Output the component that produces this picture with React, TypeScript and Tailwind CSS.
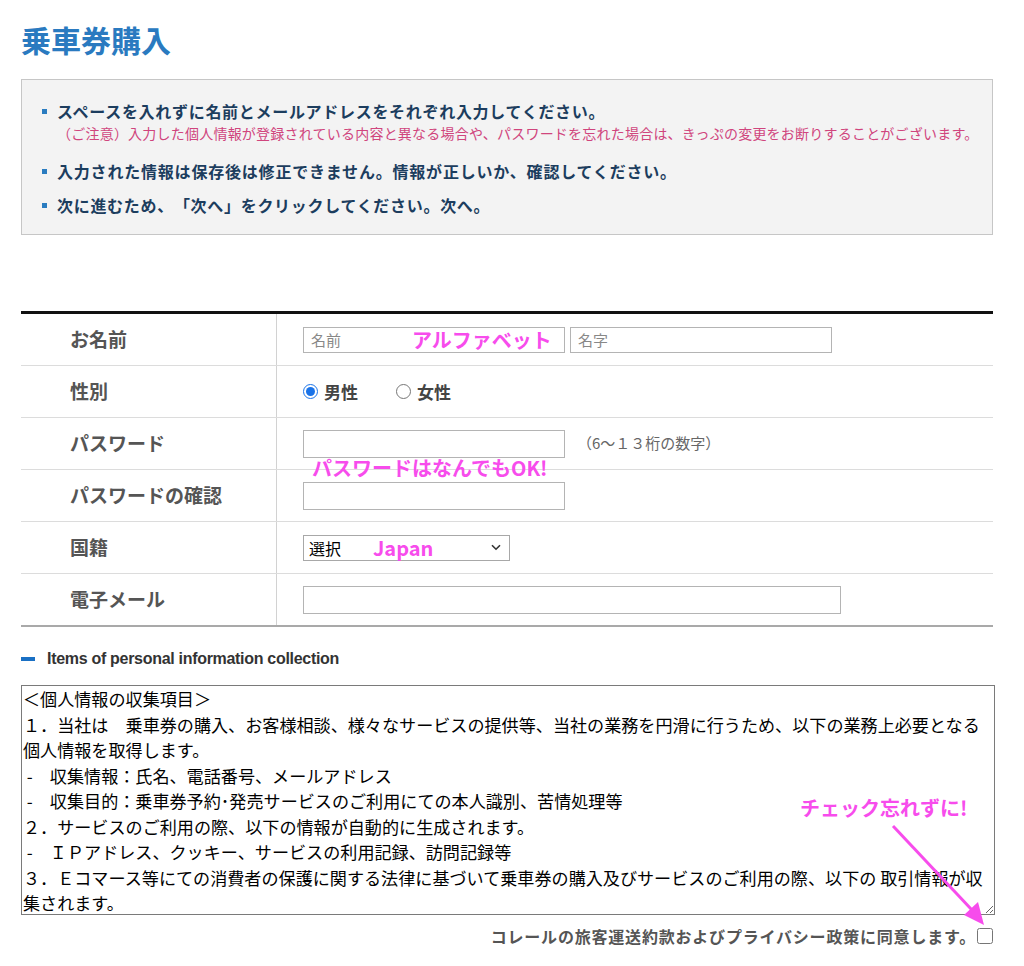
import React from "react";

const noteLines = [
  "＜個人情報の収集項目＞",
  "１．当社は　乗車券の購入、お客様相談、様々なサービスの提供等、当社の業務を円滑に行うため、以下の業務上必要となる個人情報を取得します。",
  " -　収集情報：氏名、電話番号、メールアドレス",
  " -　収集目的：乗車券予約･発売サービスのご利用にての本人識別、苦情処理等",
  "２．サービスのご利用の際、以下の情報が自動的に生成されます。",
  " -　ＩＰアドレス、クッキー、サービスの利用記録、訪問記録等",
  "３．Ｅコマース等にての消費者の保護に関する法律に基づいて乗車券の購入及びサービスのご利用の際、以下の 取引情報が収集されます。",
];

interface RowProps {
  label: string;
  last?: boolean;
  children: React.ReactNode;
}

function Row({ label, last, children }: RowProps) {
  return (
    <div
      className={
        last
          ? "flex h-[53px] border-b-[2px] border-[#a9a9a9]"
          : "flex h-[52px] border-b border-[#dcdcdc]"
      }
    >
      <div className="flex w-[256px] shrink-0 items-center border-r border-[#d2d2d2] pl-[49px] text-[19px] font-bold text-[#555]">
        {label}
      </div>
      <div className="flex flex-1 items-center pl-[26px]">{children}</div>
    </div>
  );
}

const pink = "text-[20px] font-bold leading-none text-[#f74cec]";

export default function App() {
  return (
    <div className="min-h-[966px] bg-white pl-[21px] font-['Noto_Sans_CJK_JP',sans-serif] [text-spacing-trim:space-all]">
      <div className="w-[972px]">
        <h1 className="pt-[17px] text-[30px] font-bold leading-[45px] text-[#2a7ac0]">乗車券購入</h1>

        {/* notice box */}
        <ul className="mt-[17px] flex flex-col gap-[10px] border border-[#c6c6c6] bg-[#f3f3f3] pb-[17px] pl-[20px] pr-4 pt-[19px]">
          <li>
            <div className="flex items-center gap-[10px] text-[16px] font-bold leading-[24px] tracking-[0.7px] text-[#1c3d5e]">
              <span className="h-[5px] w-[5px] bg-[#2a7cc0]" />
              スペースを入れずに名前とメールアドレスをそれぞれ入力してください。
            </div>
            <p className="mb-[6px] whitespace-nowrap pl-[15px] text-[14px] leading-[20px] tracking-[0.22px] text-[#d0457d]">
              （ご注意）入力した個人情報が登録されている内容と異なる場合や、パスワードを忘れた場合は、きっぷの変更をお断りすることがございます。
            </p>
          </li>
          <li className="flex items-center gap-[10px] text-[16px] font-bold leading-[24px] tracking-[0.8px] text-[#1c3d5e]">
            <span className="h-[5px] w-[5px] bg-[#2a7cc0]" />
            入力された情報は保存後は修正できません。情報が正しいか、確認してください。
          </li>
          <li className="flex items-center gap-[10px] text-[16px] font-bold leading-[24px] tracking-[0.7px] text-[#1c3d5e]">
            <span className="h-[5px] w-[5px] bg-[#2a7cc0]" />
            次に進むため、「次へ」をクリックしてください。次へ。
          </li>
        </ul>

        {/* form table */}
        <div className="mt-[76px] border-t-[3px] border-[#111]">
          <Row label="お名前">
            <div className="relative">
              <input
                placeholder="名前"
                className="h-[26px] w-[262px] border border-[#b4b4b4] px-[7px] text-[15px] placeholder:text-[#888]"
              />
              <span className={`pointer-events-none absolute left-[109px] top-[3px] ${pink}`}>アルファベット</span>
            </div>
            <input
              placeholder="名字"
              className="ml-[5px] h-[26px] w-[262px] border border-[#b4b4b4] px-[7px] text-[15px] placeholder:text-[#888]"
            />
          </Row>
          <Row label="性別">
            <label className="flex items-center gap-[6px] text-[17px] font-bold text-[#444]">
              <input type="radio" name="sex" defaultChecked className="m-0 h-[15px] w-[15px] accent-[#1a73e8]" />
              男性
            </label>
            <label className="ml-[38px] flex items-center gap-[6px] text-[17px] font-bold text-[#444]">
              <input type="radio" name="sex" className="m-0 h-[15px] w-[15px] accent-[#1a73e8]" />
              女性
            </label>
          </Row>
          <Row label="パスワード">
            <div className="relative">
              <input type="password" className="h-[28px] w-[262px] border border-[#b4b4b4] px-[7px]" />
              <span className={`pointer-events-none absolute left-[9px] top-[28px] z-10 whitespace-nowrap ${pink}`}>
                パスワードはなんでもOK!
              </span>
            </div>
            <span className="ml-[12px] text-[15px] text-[#666]">（6～１３桁の数字）</span>
          </Row>
          <Row label="パスワードの確認">
            <input type="password" className="h-[28px] w-[262px] border border-[#b4b4b4] px-[7px]" />
          </Row>
          <Row label="国籍">
            <div className="relative h-[26px] w-[207px]">
              <select className="h-full w-full appearance-none border border-[#a8a8a8] bg-white pl-[5px] text-[16px] text-black">
                <option>選択</option>
              </select>
              <span className={`pointer-events-none absolute left-[70px] top-[3px] ${pink}`}>Japan</span>
              <svg
                className="pointer-events-none absolute right-[9px] top-[9px]"
                width="10"
                height="7"
                viewBox="0 0 10 7"
                fill="none"
                stroke="#333"
                strokeWidth="1.6"
              >
                <path d="M1 1.2l4 4 4-4" />
              </svg>
            </div>
          </Row>
          <Row label="電子メール" last>
            <input type="email" className="h-[28px] w-[538px] border border-[#b4b4b4] px-[7px]" />
          </Row>
        </div>

        {/* personal info section */}
        <div className="mt-[20px] flex items-center gap-[12px]">
          <span className="h-[4px] w-[14px] bg-[#1a70c4]" />
          <h2 className="font-['Liberation_Sans',Arial,sans-serif] text-[16px] font-bold leading-[24px] tracking-[-0.3px] text-[#333]">
            Items of personal information collection
          </h2>
        </div>

        <div className="relative mt-[14px]">
          <textarea
            readOnly
            value={noteLines.join("\n")}
            className="block h-[230px] w-[974px] overflow-hidden border border-[#7a7a7a] px-[1px] py-0 text-[17.1px] leading-[25.5px] text-black"
          />
          <span className={`pointer-events-none absolute left-[779px] top-[113px] whitespace-nowrap ${pink}`}>
            チェック忘れずに!
          </span>
          <svg
            className="pointer-events-none absolute left-0 top-0 overflow-visible"
            width="974"
            height="260"
            viewBox="0 0 974 260"
          >
            <line x1="872" y1="141" x2="951" y2="225" stroke="#f74cec" strokeWidth="3" />
            <polygon points="963,240 943,230 957,217" fill="#f74cec" />
          </svg>
        </div>

        <div className="mt-[9px] flex items-center justify-end gap-[1px] pb-4">
          <span className="text-[16px] font-bold tracking-[0.8px] text-[#555]">
            コレールの旅客運送約款およびプライバシー政策に同意します。
          </span>
          <input type="checkbox" className="m-0 h-[16px] w-[16px]" />
        </div>
      </div>
    </div>
  );
}
